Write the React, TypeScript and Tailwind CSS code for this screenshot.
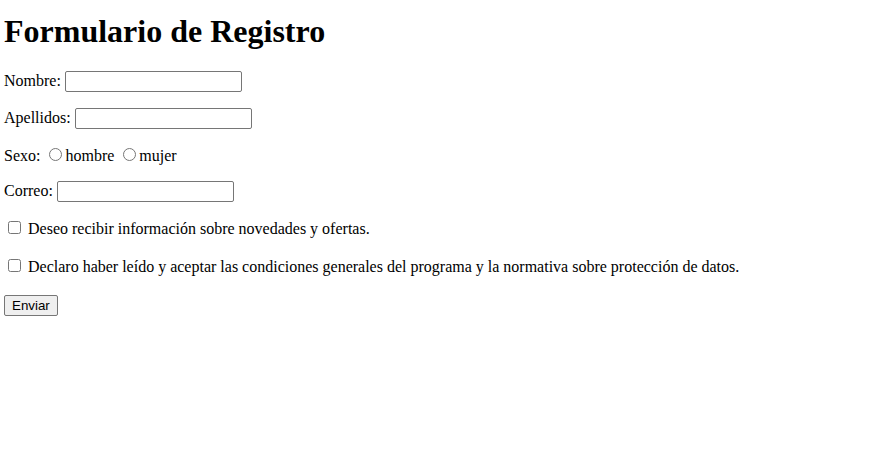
export default function App() {
  const textInput =
    "inline-block h-[21px] w-[177px] border border-[#767676] rounded-[2px] bg-white px-[2px] py-[1px] align-baseline font-['Liberation_Sans',Arial,sans-serif] text-[13.333px] leading-[normal]";

  return (
    <div className="flow-root min-h-screen bg-white pl-1 pt-[13px] font-['Liberation_Serif','Times_New_Roman',serif] text-[16px] leading-[normal] text-black">
      <h1 className="mb-[21.44px] text-[32px] font-bold leading-[normal]">Formulario de Registro</h1>

      <form onSubmit={(e) => e.preventDefault()}>
        <p className="mb-4">
          Nombre: <input type="text" className={textInput} />
        </p>
        <p className="my-4">
          Apellidos: <input type="text" className={textInput} />
        </p>
        <p className="my-4">
          Sexo:{" "}
          <input type="radio" name="sexo" className="ml-[5px] mr-[3px] mt-[3px] align-baseline" />
          hombre{" "}
          <input type="radio" name="sexo" className="ml-[5px] mr-[3px] mt-[3px] align-baseline" />
          mujer
        </p>
        <p className="my-4">
          Correo: <input type="email" className={textInput} />
        </p>
        <p className="mt-4 mb-[18px]">
          <input type="checkbox" className="mx-[3px] ml-1 my-[3px] align-baseline" /> Deseo recibir información sobre
          novedades y ofertas.
        </p>
        <p className="mt-[18px] mb-[19px]">
          <input type="checkbox" className="mx-[3px] ml-1 my-[3px] align-baseline" /> Declaro haber leído y aceptar las
          condiciones generales del programa y la normativa sobre protección de datos.
        </p>
        <button
          type="submit"
          className="h-[21px] rounded-[2px] border border-[#767676] bg-[#efefef] px-[7px] py-0 font-['Liberation_Sans',Arial,sans-serif] text-[13.333px] leading-[normal] text-black"
        >
          Enviar
        </button>
      </form>
    </div>
  );
}
